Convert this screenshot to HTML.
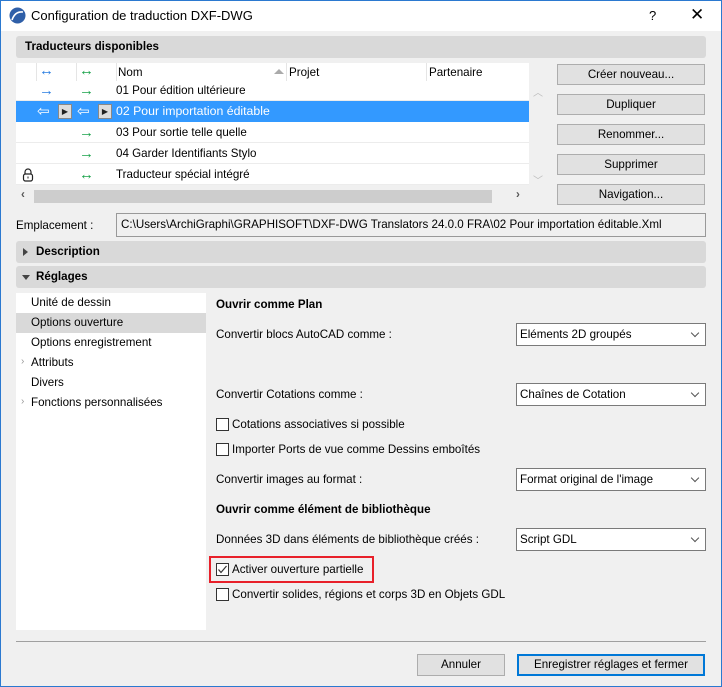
<!DOCTYPE html>
<html><head><meta charset="utf-8"><style>
*{box-sizing:border-box;margin:0;padding:0}
body{width:722px;height:687px;overflow:hidden;background:#f0f0f0;font-family:"Liberation Sans",sans-serif;font-size:11.6px;color:#000;position:relative}
.a{position:absolute;white-space:nowrap}
.bar{position:absolute;left:16px;width:690px;height:22px;background:#d9d9d9;border-radius:3px;font-weight:bold;line-height:22px}
.btn{position:absolute;left:557px;width:148px;height:21px;background:#e1e1e1;border:1px solid #adadad;text-align:center;line-height:19px}
.row{position:absolute;left:16px;width:513px;height:21px;border-bottom:1px solid #ececec;line-height:21px}
.combo{position:absolute;left:516px;width:190px;height:23px;background:#fff;border:1px solid #7a7a7a;line-height:21px;padding-left:3px}
.combo:after{content:"";position:absolute;right:7px;top:6px;width:5px;height:5px;border-right:1px solid #555;border-bottom:1px solid #555;transform:rotate(45deg)}
.cb{position:absolute;left:216px;width:13px;height:13px;border:1px solid #333;background:#fff}
.g{color:#1aa34a;font-size:15px}.b{color:#2a7de1;font-size:15px}
</style></head><body>
<div class="a" style="left:0;top:0;width:722px;height:687px;border:1px solid #2b79d0;"></div>
<div class="a" style="left:1px;top:1px;width:720px;height:30px;background:#fff"></div>
<svg class="a" style="left:9px;top:7px" width="17" height="17"><circle cx="8.5" cy="8.5" r="8" fill="#2f5fa8"/><path d="M3 13 Q6 4 14 5" stroke="#fff" stroke-width="1.6" fill="none"/></svg>
<div class="a" style="left:31px;top:8px;font-size:13px">Configuration de traduction DXF-DWG</div>
<div class="a" style="left:649px;top:8px;font-size:13px">?</div>
<div class="a" style="left:690px;top:5px;font-size:17px">✕</div>

<div class="bar" style="top:36px;padding-left:9px">Traducteurs disponibles</div>
<div class="a" style="left:16px;top:63px;width:513px;height:122px;background:#fff"></div>
<div class="a" style="left:36px;top:63px;height:18px;border-left:1px solid #e5e5e5"></div>
<div class="a" style="left:76px;top:63px;height:18px;border-left:1px solid #e5e5e5"></div>
<div class="a" style="left:116px;top:63px;height:18px;border-left:1px solid #e5e5e5"></div>
<div class="a" style="left:286px;top:63px;height:18px;border-left:1px solid #e5e5e5"></div>
<div class="a" style="left:426px;top:63px;height:18px;border-left:1px solid #e5e5e5"></div>
<div class="a b" style="left:39px;top:62px">↔</div><div class="a g" style="left:79px;top:62px">↔</div>
<div class="a" style="left:118px;top:66px">Nom</div>
<div class="a" style="left:274px;top:69px;width:0;height:0;border:5px solid transparent;border-bottom-color:#aaa;border-top:0"></div>
<div class="a" style="left:289px;top:66px">Projet</div><div class="a" style="left:429px;top:66px">Partenaire</div>
<div class="row" style="top:80px"><span class="a b" style="left:23px">→</span><span class="a g" style="left:63px">→</span><span class="a" style="left:100px">01 Pour édition ultérieure</span></div>
<div class="row" style="top:101px;background:#3399ff;color:#fff;border:0"><span class="a" style="left:21px;font-size:15px">⇦</span><span class="a" style="left:42px;top:3px;width:14px;height:15px;background:#ddd;border:1px solid #888;color:#222;font-size:8px;line-height:13px;text-align:center">▶</span><span class="a" style="left:61px;font-size:15px">⇦</span><span class="a" style="left:82px;top:3px;width:14px;height:15px;background:#ddd;border:1px solid #888;color:#222;font-size:8px;line-height:13px;text-align:center">▶</span><span class="a" style="left:100px;font-size:12.3px">02 Pour importation éditable</span></div>
<div class="row" style="top:122px"><span class="a g" style="left:63px">→</span><span class="a" style="left:100px">03 Pour sortie telle quelle</span></div>
<div class="row" style="top:143px"><span class="a g" style="left:63px">→</span><span class="a" style="left:100px">04 Garder Identifiants Stylo</span></div>
<div class="row" style="top:164px"><svg class="a" style="left:6px;top:4px" width="12" height="14"><path d="M3 6 V4 a3 3 0 0 1 6 0 V6" stroke="#222" fill="none" stroke-width="1.2"/><rect x="1.5" y="6" width="9" height="7" rx="2" fill="none" stroke="#222" stroke-width="1.2"/><line x1="6" y1="8.5" x2="6" y2="10.5" stroke="#222"/></svg><span class="a g" style="left:63px">↔</span><span class="a" style="left:100px">Traducteur spécial intégré</span></div>
<div class="a" style="left:16px;top:189px;width:513px;height:15px;background:#f0f0f0"></div>
<div class="a" style="left:34px;top:190px;width:458px;height:13px;background:#cdcdcd"></div>
<div class="a" style="left:21px;top:188px;font-weight:bold;color:#555">‹</div>
<div class="a" style="left:516px;top:188px;font-weight:bold;color:#555">›</div>
<div class="a" style="left:533px;top:84px;color:#bbb;font-size:10px">︿</div>
<div class="a" style="left:533px;top:172px;color:#bbb;font-size:10px">﹀</div>
<div class="btn" style="top:64px">Créer nouveau...</div>
<div class="btn" style="top:94px">Dupliquer</div>
<div class="btn" style="top:124px">Renommer...</div>
<div class="btn" style="top:154px">Supprimer</div>
<div class="btn" style="top:184px">Navigation...</div>
<div class="a" style="left:16px;top:219px">Emplacement :</div>
<div class="a" style="left:116px;top:213px;width:590px;height:24px;border:1px solid #999;background:#f0f0f0;line-height:22px;padding-left:4px">C:\Users\ArchiGraphi\GRAPHISOFT\DXF-DWG Translators 24.0.0 FRA\02 Pour importation éditable.Xml</div>
<div class="bar" style="top:241px;padding-left:20px">Description<span class="a" style="left:7px;top:7px;border:4px solid transparent;border-left:5px solid #444;border-right:0"></span></div>
<div class="bar" style="top:266px;padding-left:20px">Réglages<span class="a" style="left:6px;top:9px;border:4px solid transparent;border-top:5px solid #444;border-bottom:0"></span></div>
<div class="a" style="left:16px;top:293px;width:190px;height:337px;background:#fff"></div>
<div class="a" style="left:16px;top:313px;width:190px;height:20px;background:#d9d9d9"></div>
<div class="a" style="left:31px;top:296px">Unité de dessin</div>
<div class="a" style="left:31px;top:316px">Options ouverture</div>
<div class="a" style="left:31px;top:336px">Options enregistrement</div>
<div class="a" style="left:21px;top:356px;color:#999;font-size:10px">›</div><div class="a" style="left:31px;top:356px">Attributs</div>
<div class="a" style="left:31px;top:376px">Divers</div>
<div class="a" style="left:21px;top:396px;color:#999;font-size:10px">›</div><div class="a" style="left:31px;top:396px">Fonctions personnalisées</div>
<div class="a" style="left:216px;top:298px;font-weight:bold">Ouvrir comme Plan</div>
<div class="a" style="left:216px;top:328px">Convertir blocs AutoCAD comme :</div>
<div class="combo" style="top:323px">Eléments 2D groupés</div>
<div class="a" style="left:216px;top:388px">Convertir Cotations comme :</div>
<div class="combo" style="top:383px">Chaînes de Cotation</div>
<div class="cb" style="top:418px"></div><div class="a" style="left:232px;top:418px">Cotations associatives si possible</div>
<div class="cb" style="top:443px"></div><div class="a" style="left:232px;top:443px">Importer Ports de vue comme Dessins emboîtés</div>
<div class="a" style="left:216px;top:473px">Convertir images au format :</div>
<div class="combo" style="top:468px">Format original de l'image</div>
<div class="a" style="left:216px;top:503px;font-weight:bold">Ouvrir comme élément de bibliothèque</div>
<div class="a" style="left:216px;top:533px">Données 3D dans éléments de bibliothèque créés :</div>
<div class="combo" style="top:528px">Script GDL</div>
<div class="a" style="left:209px;top:556px;width:165px;height:27px;border:2px solid #e8202a"></div>
<div class="cb" style="top:563px"></div><svg class="a" style="left:216px;top:563px" width="13" height="13"><path d="M2.5 6.5 L5 9.5 L10.5 3" stroke="#333" stroke-width="1.2" fill="none"/></svg><div class="a" style="left:232px;top:563px">Activer ouverture partielle</div>
<div class="cb" style="top:588px"></div><div class="a" style="left:232px;top:588px">Convertir solides, régions et corps 3D en Objets GDL</div>
<div class="a" style="left:16px;top:641px;width:690px;border-top:1px solid #a0a0a0"></div>
<div class="a" style="left:417px;top:654px;width:88px;height:22px;background:#e1e1e1;border:1px solid #adadad;text-align:center;line-height:20px">Annuler</div>
<div class="a" style="left:517px;top:654px;width:188px;height:22px;background:#e1e1e1;border:2px solid #0078d7;text-align:center;line-height:18px">Enregistrer réglages et fermer</div>
</body></html>
